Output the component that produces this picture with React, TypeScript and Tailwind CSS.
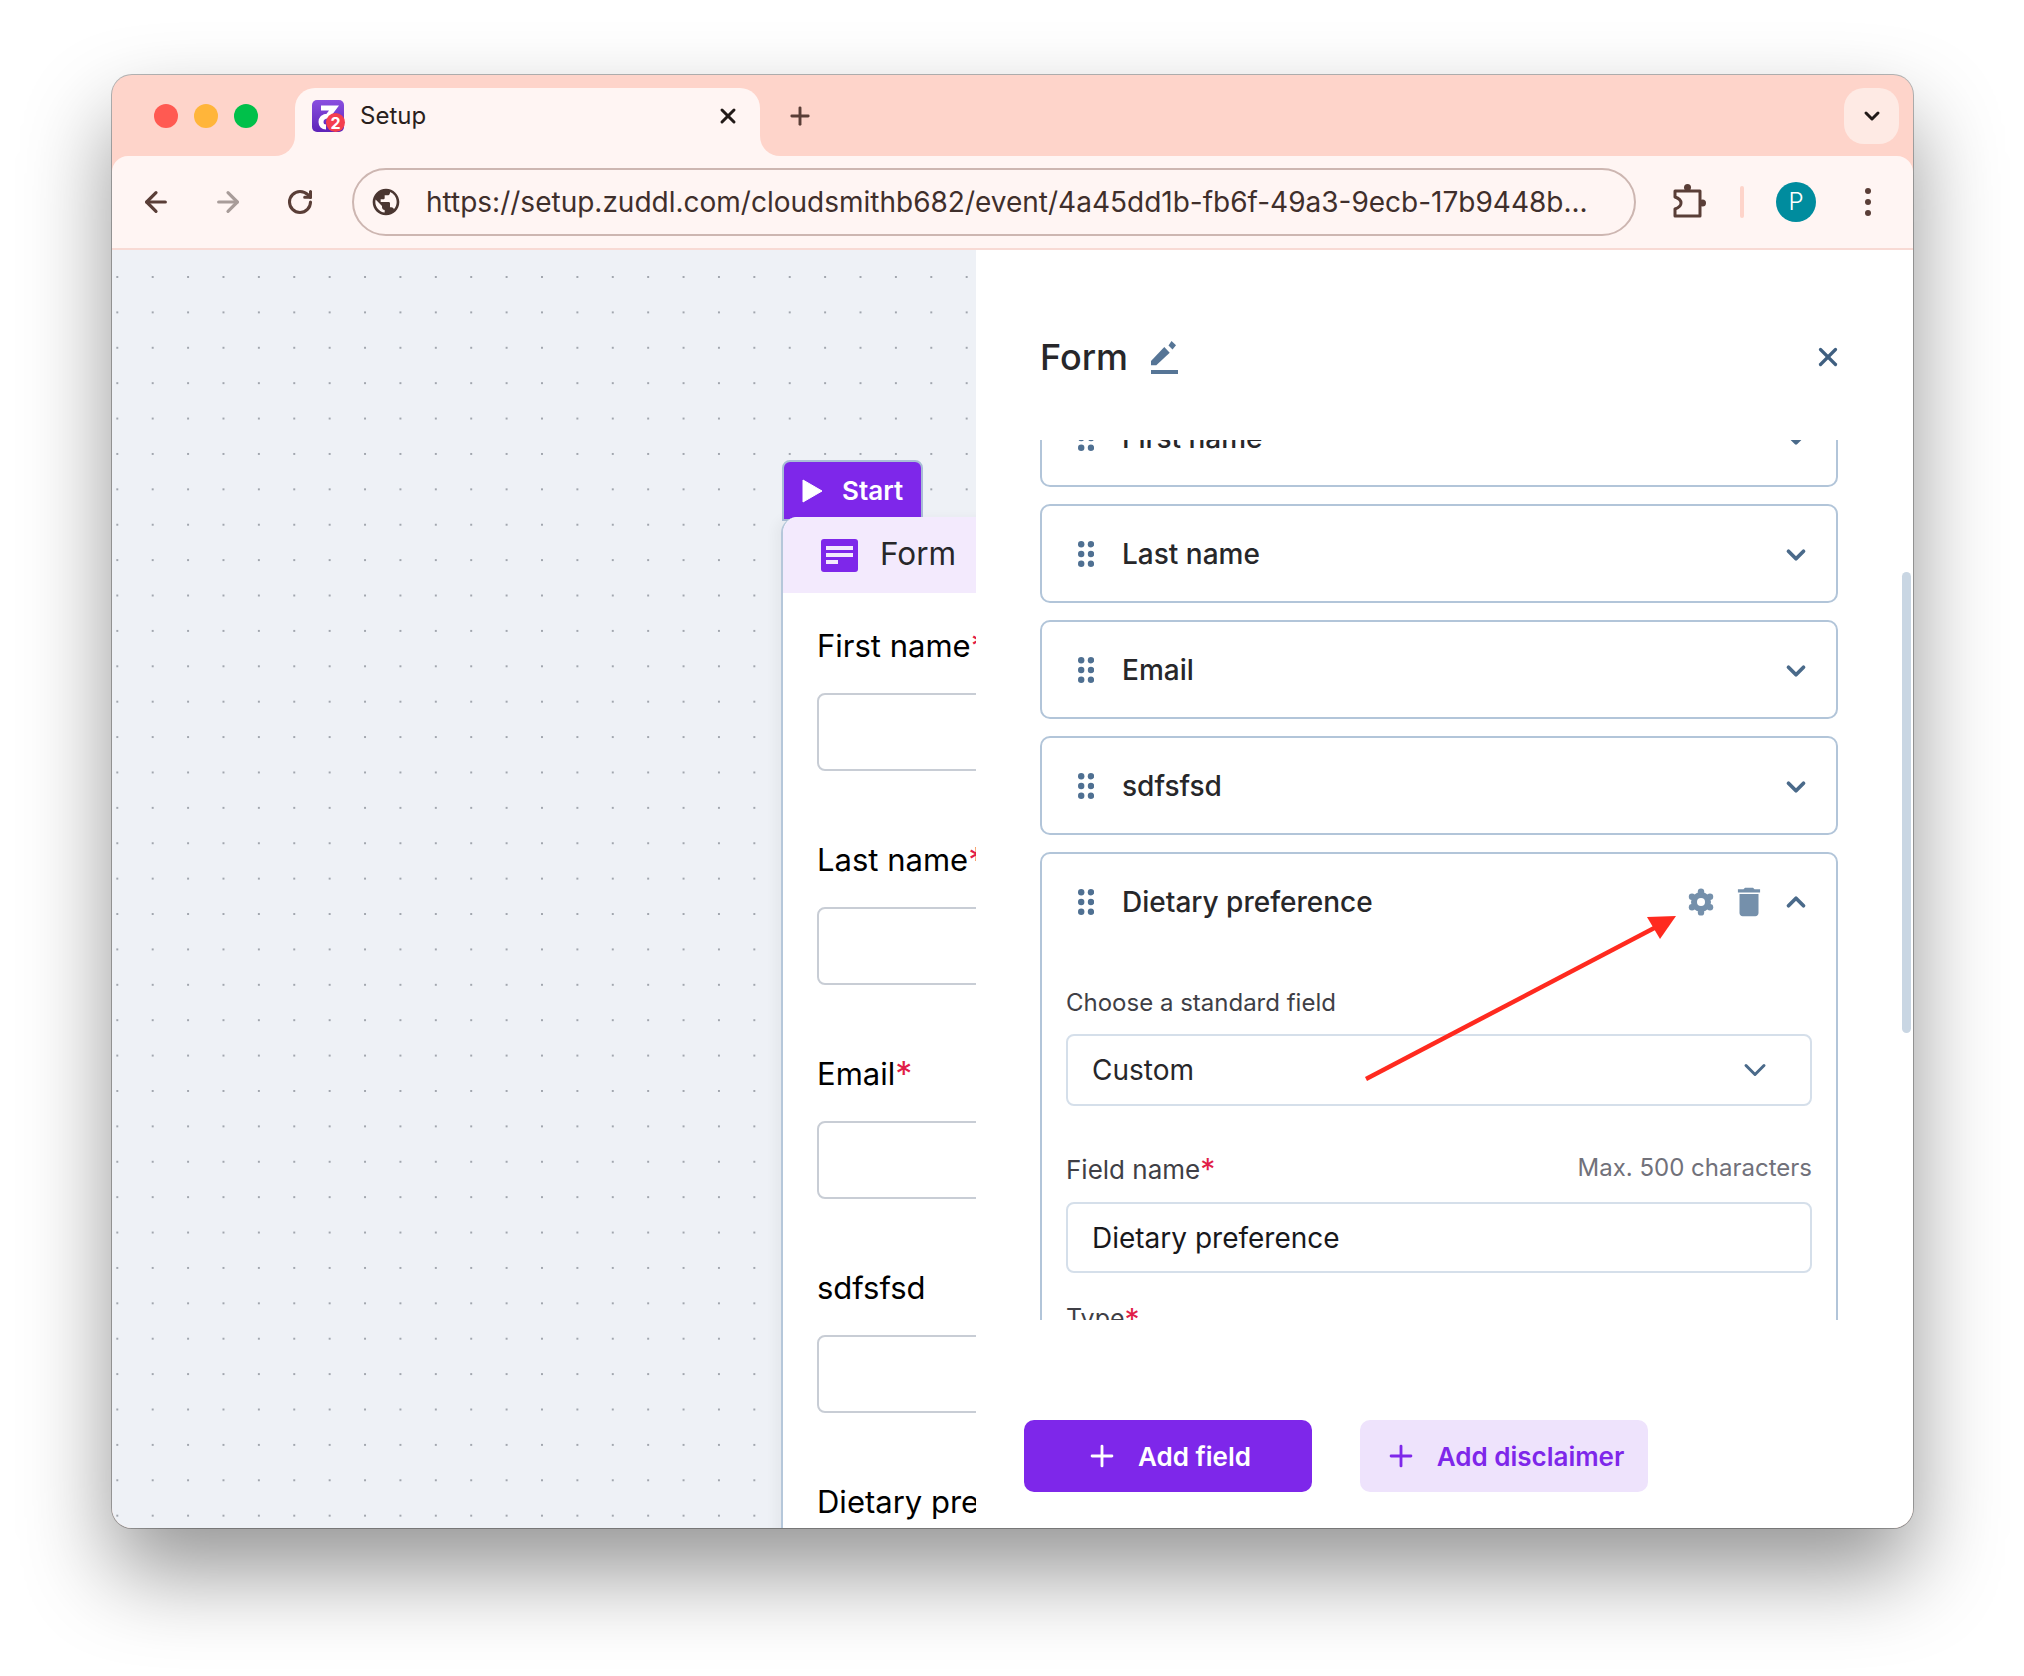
import React from 'react';
import { ArrowLeft, ArrowRight, RotateCw, X, Plus, ChevronDown, ChevronUp } from 'lucide-react';
import { MdPublic, MdDelete } from 'react-icons/md';

function DragDots() {
  return (
    <svg width="16" height="26" viewBox="0 0 16 26" className="shrink-0 text-[#4f7092]" fill="currentColor">
      {[3.2, 13].map((x) => [3.2, 13, 22.8].map((y) => <circle key={`${x}-${y}`} cx={x} cy={y} r="3.2" />))}
    </svg>
  );
}

function Gear() {
  return (
    <svg width="28" height="28" viewBox="-14 -14 28 28" className="ml-auto shrink-0 text-[#7590ab]">
      <circle r="10" fill="currentColor" />
      {[90, 30, -30, -90, -150, 150].map((a) => (
        <circle
          key={a}
          cx={10.4 * Math.cos((a * Math.PI) / 180)}
          cy={10.4 * Math.sin((a * Math.PI) / 180)}
          r="3.2"
          fill="currentColor"
        />
      ))}
      <circle r="4" fill="white" />
    </svg>
  );
}

function FieldRow({ label }: { label: string }) {
  return (
    <div className="h-[99px] mb-[17px] flex items-center pl-[36px] pr-[25px] border-2 border-[#b2c5d9] rounded-[10px]">
      <DragDots />
      <span className="ml-[28px] text-[28px] font-medium text-[#27272a]">{label}</span>
      <ChevronDown size={30} strokeWidth={3} className="ml-auto mt-[2px] text-[#4a6a8a]" />
    </div>
  );
}

function Favicon() {
  return (
    <div className="relative w-8 h-8 shrink-0 rounded-[5px] bg-gradient-to-b from-[#8a4fe0] to-[#5e22b8]">
      <svg width="32" height="32" viewBox="0 0 32 32" className="absolute inset-0" fill="none">
        <path d="M9 8 H22 L16 16 C11 16 9 19 9 22 C9 25 11 27 14 27" stroke="white" strokeWidth="5" />
      </svg>
      <div className="absolute right-[-1px] bottom-0 w-[19px] h-[19px] rounded-full bg-[#f43f4e] flex items-center justify-center text-white text-[16px] font-bold leading-none">
        2
      </div>
    </div>
  );
}

function NodeField({ label, star }: { label: string; star?: boolean }) {
  return (
    <div className="mb-[69px]">
      <div className="h-[40px] flex items-center text-[31px] text-black whitespace-nowrap">
        {label}
        {star && <span className="text-[34px] leading-none text-[#e11d48]">*</span>}
      </div>
      <div className="mt-[27px] h-[78px] w-[400px] border-2 border-[#c8cdd5] rounded-[8px]" />
    </div>
  );
}

function TitleBar() {
  return (
    <div className="h-[81px] flex items-start pl-[42px] pt-[13px]">
      <div className="flex gap-4 mt-[16px]">
        <div className="w-6 h-6 rounded-full bg-[#ff5a52]" />
        <div className="w-6 h-6 rounded-full bg-[#ffb53a]" />
        <div className="w-6 h-6 rounded-full bg-[#00c04a]" />
      </div>
      <div className="relative ml-[37px] w-[465px] h-[68px] bg-[#fff5f3] rounded-t-[20px] flex items-center pl-[17px] pr-[20px] pb-[12px]">
        <div className="absolute -left-5 bottom-0 w-5 h-5 bg-[#fff5f3]">
          <div className="w-full h-full bg-[#fed4ca] rounded-br-[20px]" />
        </div>
        <div className="absolute -right-5 bottom-0 w-5 h-5 bg-[#fff5f3]">
          <div className="w-full h-full bg-[#fed4ca] rounded-bl-[20px]" />
        </div>
        <Favicon />
        <span className="ml-4 text-[24px] text-[#2a1f1c]">Setup</span>
        <X size={24} strokeWidth={3} className="ml-auto text-[#221a18]" />
      </div>
      <Plus size={28} strokeWidth={2.5} className="ml-[26px] mt-[14px] text-[#5a3e37]" />
      <div className="ml-auto mr-[14px] w-[55px] h-[56px] rounded-[20px] bg-[#feeae4] flex items-center justify-center">
        <ChevronDown size={24} strokeWidth={3} className="text-[#221a18]" />
      </div>
    </div>
  );
}

function ToolBar() {
  return (
    <div className="h-[94px] bg-[#fff5f3] rounded-t-[16px] border-b-2 border-[#f8dad4] flex items-center pl-[28px]">
      <ArrowLeft size={32} strokeWidth={2.4} className="text-[#5a3e37]" />
      <ArrowRight size={32} strokeWidth={2.4} className="ml-[40px] text-[#a89c99]" />
      <RotateCw size={28} strokeWidth={2.6} className="ml-[42px] mr-[2px] text-[#5a3e37]" />
      <div className="ml-[36px] w-[1284px] h-[68px] rounded-full border-2 border-[#cdb6b1] flex items-center pl-[16px]">
        <MdPublic size={32} className="text-[#4a3631]" />
        <span className="ml-[24px] text-[28px] text-[#3f2f2b] whitespace-nowrap">
          https://setup.zuddl.com/cloudsmithb682/event/4a45dd1b-fb6f-49a3-9ecb-17b9448b...
        </span>
      </div>
      <svg width="36" height="38" viewBox="0 0 36 38" className="ml-[36px] -mt-[2px] text-[#5a3e37]" fill="none" stroke="currentColor" strokeWidth="3">
        <path d="M3 9 H28 V34 H3 V27 Q9 25 9 21 Q9 17 3 15 Z" strokeLinejoin="round" />
        <circle cx="15.5" cy="5.5" r="3.5" fill="currentColor" stroke="none" />
        <circle cx="30.5" cy="21" r="3.5" fill="currentColor" stroke="none" />
      </svg>
      <div className="ml-[32px] w-1 h-8 rounded-full bg-[#fed4ca]" />
      <div className="ml-[32px] w-10 h-10 rounded-full bg-[#008c9e] flex items-center justify-center text-white text-[24px] font-light">
        P
      </div>
      <div className="ml-[49px] flex flex-col gap-[5px]">
        <div className="w-[6px] h-[6px] rounded-full bg-[#5a3e37]" />
        <div className="w-[6px] h-[6px] rounded-full bg-[#5a3e37]" />
        <div className="w-[6px] h-[6px] rounded-full bg-[#5a3e37]" />
      </div>
    </div>
  );
}

function Canvas() {
  return (
    <div className="relative w-[864px] overflow-hidden bg-[#eef1f6] bg-[radial-gradient(circle,#a1a6ae_1px,transparent_1.3px)] bg-[size:35.4px_35.4px] bg-[position:-12.4px_9.3px]">
      {/* Form node */}
      <div className="absolute left-[669px] top-[210px] w-[500px]">
        <div className="w-[141px] h-[61px] -mb-[4px] ml-[1px] bg-[#7e27ea] border-2 border-[#a9bdd6] rounded-t-[8px] flex items-start pt-[17px] pl-[18px]">
          <svg width="21" height="24" viewBox="0 0 21 24" fill="white" className="shrink-0">
            <path d="M1 1 L20 12 L1 23 Z" strokeLinejoin="round" stroke="white" strokeWidth="1" />
          </svg>
          <span className="ml-[19px] -mt-[1px] text-[26px] leading-[26px] font-semibold text-white">Start</span>
        </div>
        <div className="relative bg-white border-l-2 border-[#b5c7da] rounded-tl-[16px] h-[1100px] shadow-[-6px_0_12px_rgba(0,0,0,0.04)]">
          <div className="h-[76px] bg-[#f3eafd] rounded-tl-[16px] flex items-center pl-[38px]">
            <div className="w-[37px] h-[33px] rounded-[3px] bg-[#7e27ea] flex flex-col justify-center gap-[3px] px-[5px]">
              <div className="h-[4px] w-full bg-[#f3eafd]" />
              <div className="h-[4px] w-full bg-[#f3eafd]" />
              <div className="h-[4px] w-[12px] bg-[#f3eafd]" />
            </div>
            <span className="ml-[22px] -mt-[2px] text-[31.5px] text-[#27272a]">Form</span>
          </div>
          <div className="pt-[33px] pl-[34px]">
            <NodeField label="First name" star />
            <NodeField label="Last name" star />
            <NodeField label="Email" star />
            <NodeField label="sdfsfsd" />
            <NodeField label="Dietary preference" />
          </div>
        </div>
      </div>
    </div>
  );
}

function SidePanel() {
  return (
    <div className="relative flex-1 flex flex-col bg-white">
      <div className="h-[190px] shrink-0 pt-[24px] pl-[64px] pr-[70px] flex items-center">
        <span className="text-[36px] font-medium text-[#27272a]">Form</span>
        <svg width="27" height="34" viewBox="0 0 27 34" className="ml-[23px] text-[#567596]" fill="currentColor">
          <path d="M0 21 L13.3 7 L18.7 12.7 L5.3 25.3 H0 Z" />
          <path d="M17.5 5.5 L20.5 1 L25 5.3 L21.5 9.5 Z" />
          <rect x="0" y="30" width="27" height="4" />
        </svg>
        <X size={30} strokeWidth={2.6} className="ml-auto text-[#3f5f80]" />
      </div>

      <div className="ml-[64px] w-[798px] h-[880px] shrink-0 overflow-hidden">
        <div className="-mt-[52px]">
          <FieldRow label="First name" />
          <FieldRow label="Last name" />
          <FieldRow label="Email" />
          <FieldRow label="sdfsfsd" />

          <div className="border-2 border-[#b2c5d9] rounded-[10px] px-[24px] pb-[100px]">
            <div className="h-[96px] flex items-center pl-[12px] pr-[1px]">
              <DragDots />
              <span className="ml-[28px] text-[28px] font-medium text-[#27272a]">Dietary preference</span>
              <Gear />
              <MdDelete size={38} className="ml-[15px] text-[#7590ab]" />
              <ChevronUp size={30} strokeWidth={3} className="ml-[13px] text-[#4a6a8a]" />
            </div>
            <div className="mt-[37px] h-8 flex items-center text-[24px] text-[#3f3f46]">Choose a standard field</div>
            <div className="mt-[15px] h-[72px] border-2 border-[#d5dfea] rounded-[8px] flex items-center pl-[24px] pr-[37px]">
              <span className="text-[28px] text-[#27272a]">Custom</span>
              <ChevronDown size={36} strokeWidth={2} className="ml-auto text-[#4a6a8a]" />
            </div>
            <div className="mt-[48px] h-8 flex items-center justify-between">
              <span className="-mt-[2px] flex items-center text-[26px] text-[#3f3f46]">
                Field name<span className="text-[30px] leading-none text-[#e11d48]">*</span>
              </span>
              <span className="-mt-[4px] text-[24px] text-[#71717a]">Max. 500 characters</span>
            </div>
            <div className="mt-[16px] h-[71px] border-2 border-[#d5dfea] rounded-[8px] flex items-center pl-[24px]">
              <span className="text-[28px] text-[#18181b]">Dietary preference</span>
            </div>
            <div className="mt-[30px] h-8 flex items-center text-[25px] text-[#3f3f46]">
              Type<span className="text-[30px] leading-none text-[#e11d48]">*</span>
            </div>
          </div>
        </div>
      </div>

      <div className="pt-[100px] pl-[48px] flex gap-[48px]">
        <button className="w-[288px] h-[72px] rounded-[10px] bg-[#7e27ea] text-white text-[26px] font-semibold flex items-center justify-center gap-[19px]">
          <Plus size={34} strokeWidth={2} />
          Add field
        </button>
        <button className="w-[288px] h-[72px] rounded-[10px] bg-[#eee3fc] text-[#7e27ea] text-[26px] font-semibold flex items-center justify-center gap-[19px]">
          <Plus size={34} strokeWidth={2} />
          Add disclaimer
        </button>
      </div>

      {/* scrollbar */}
      <div className="absolute right-[2px] top-[322px] w-[9px] h-[461px] rounded-full bg-[#c9d6e3]" />
    </div>
  );
}

export default function App() {
  return (
    <div className="relative w-[2024px] h-[1676px] overflow-hidden bg-white pt-[75px] pl-[112px] [font-family:Inter,sans-serif]">
      <div className="w-[1801px] h-[1453px] rounded-[20px] overflow-hidden bg-[#fed4ca] flex flex-col shadow-[0_0_0_1px_rgba(0,0,0,0.28),0_44px_88px_rgba(0,0,0,0.42)]">
        <TitleBar />
        <ToolBar />
        <div className="flex-1 flex min-h-0">
          <Canvas />
          <SidePanel />
        </div>
      </div>

      {/* annotation arrow */}
      <svg className="absolute left-0 top-0" width="2024" height="1676" fill="none">
        <line x1="1366" y1="1079" x2="1660" y2="925" stroke="#ff2a1f" strokeWidth="4.5" />
        <path d="M1676 916 L1647 917 L1660 939 Z" fill="#ff2a1f" />
      </svg>
    </div>
  );
}
